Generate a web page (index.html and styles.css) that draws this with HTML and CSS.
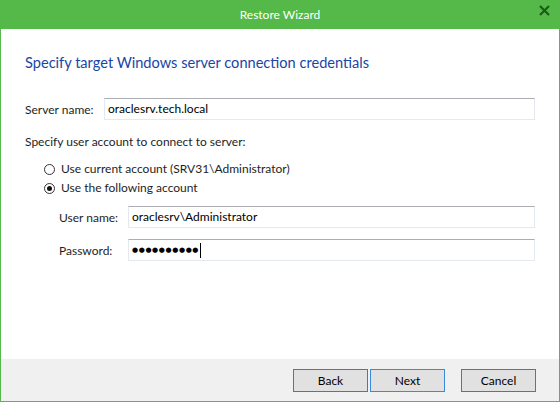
FILE: index.html
```html
<!DOCTYPE html>
<html>
<head>
<meta charset="utf-8">
<link rel="stylesheet" href="styles.css">
</head>
<body>
<div class="window">
  <div class="titlebar">
    <span></span>
    <span class="title">Restore Wizard</span>
    <span class="close"><svg width="11" height="11" viewBox="0 0 11 11"><path d="M1 1 L10 10 M10 1 L1 10" stroke="#1f5a1a" stroke-width="2.2" fill="none"/></svg></span>
  </div>
  <div class="content">
    <h1 class="heading">Specify target Windows server connection credentials</h1>
    <div class="row server-row">
      <span class="label server-label">Server name:</span>
      <div class="field server-field">oraclesrv.tech.local</div>
    </div>
    <div class="prompt">Specify user account to connect to server:</div>
    <div class="radios">
      <div class="radio-row"><span class="radio"></span><span>Use current account (SRV31\Administrator)</span></div>
      <div class="radio-row"><span class="radio checked"></span><span>Use the following account</span></div>
    </div>
    <div class="account">
      <div class="row">
        <span class="label acc-label">User name:</span>
        <div class="field acc-field">oraclesrv\Administrator</div>
      </div>
      <div class="row">
        <span class="label acc-label">Password:</span>
        <div class="field acc-field"><span class="dots">●●●●●●●●●●</span><span class="caret"></span></div>
      </div>
    </div>
  </div>
  <div class="footer">
    <button class="btn">Back</button>
    <button class="btn default">Next</button>
    <button class="btn cancel">Cancel</button>
  </div>
</div>
</body>
</html>
```
FILE: styles.css
```css
html, body {
  margin: 0;
  padding: 0;
  background: #ffffff;
}
body {
  font-family: "Lato", "Liberation Sans", sans-serif;
  font-size: 12px;
  color: #1e1e1e;
}
.window {
  width: 560px;
  height: 402px;
  box-sizing: border-box;
  border-left: 1px solid #54b948;
  border-right: 1px solid #54b948;
  border-bottom: 1px solid #54b948;
  display: flex;
  flex-direction: column;
  background: #ffffff;
}
.titlebar {
  height: 29px;
  margin: 0 -1px;
  background: #54b948;
  display: grid;
  grid-template-columns: 1fr auto 1fr;
  align-items: center;
}
.title {
  color: #ffffff;
  font-size: 12px;
  line-height: 29px;
}
.close {
  justify-self: end;
  padding-right: 10px;
  display: flex;
  align-items: center;
  height: 29px;
  padding-bottom: 8px;
  box-sizing: border-box;
}
.content {
  flex: 1;
  padding: 0 24px 0 24px;
}
.heading {
  margin: 24px 0 0 0;
  font-size: 14.6px;
  font-weight: normal;
  color: #1846a6;
  line-height: 20px;
}
.row {
  display: flex;
  align-items: center;
}
.server-row {
  margin-top: 25px;
}
.label {
  flex: none;
}
.server-label {
  width: 79px;
}
.field {
  flex: 1;
  height: 22px;
  box-sizing: border-box;
  border: 1px solid #e3e9ef;
  border-top-color: #abadb3;
  padding-left: 3px;
  line-height: 20px;
  color: #000000;
  display: flex;
  align-items: center;
}
.prompt {
  margin-top: 14px;
  line-height: 16px;
}
.radios {
  margin-top: 11px;
  padding-left: 19px;
  display: flex;
  flex-direction: column;
  gap: 3px;
}
.radio-row {
  display: flex;
  align-items: center;
  gap: 6px;
  line-height: 16px;
}
.radio {
  width: 11px;
  height: 11px;
  box-sizing: border-box;
  border: 1px solid #333333;
  border-radius: 50%;
  background: #ffffff;
  display: flex;
  align-items: center;
  justify-content: center;
}
.radio.checked::after {
  content: "";
  width: 5px;
  height: 5px;
  border-radius: 50%;
  background: #111111;
}
.account {
  margin-top: 10px;
  padding-left: 34px;
  display: flex;
  flex-direction: column;
  gap: 11px;
}
.acc-label {
  width: 69px;
}
.dots {
  font-family: "DejaVu Sans", sans-serif;
  font-size: 7px;
  letter-spacing: 0.6px;
  color: #000000;
}
.caret {
  width: 1px;
  height: 15px;
  background: #000000;
  margin-left: 1px;
}
.footer {
  height: 42px;
  flex: none;
  background: #f0f0f0;
  display: flex;
  justify-content: flex-end;
  align-items: flex-start;
  padding: 10px 23px 0 0;
  box-sizing: border-box;
}
.btn {
  width: 75px;
  height: 23px;
  box-sizing: border-box;
  border: 1px solid #707070;
  background: #e1e1e1;
  font-family: "Lato", "Liberation Sans", sans-serif;
  font-size: 12px;
  color: #000000;
  padding: 0;
  margin: 0 0 0 2px;
}
.btn.default {
  border-color: #3c8ae0;
}
.btn.cancel {
  margin-left: 16px;
}
```
